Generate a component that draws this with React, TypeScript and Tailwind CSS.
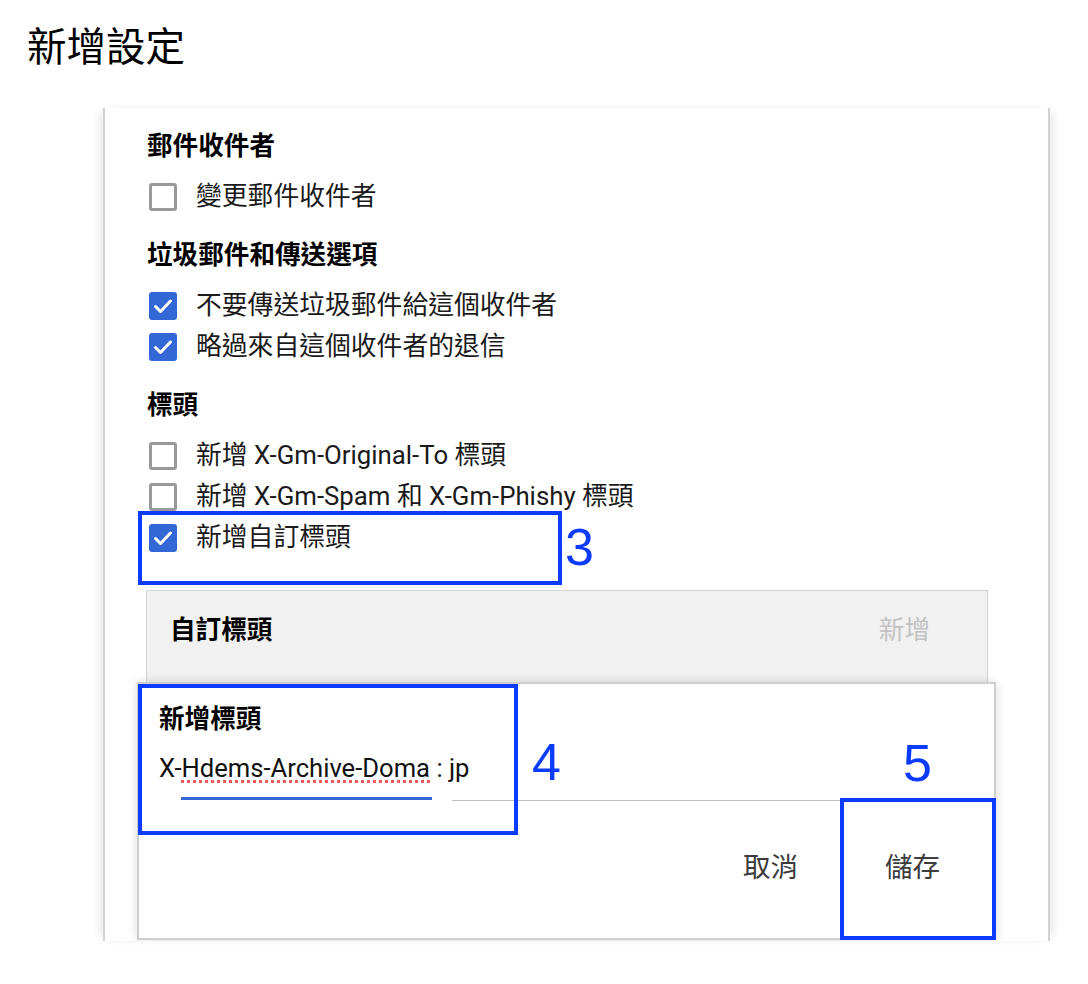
import React from 'react';

const FONT = "font-['Roboto','Noto_Sans_CJK_TC',sans-serif]";

function Checkbox({ checked }: { checked: boolean }) {
  if (checked) {
    return (
      <span className="ml-[2px] flex h-[28px] w-[28px] shrink-0 items-center justify-center rounded-[3px] bg-[#3367d6]">
        <svg width="24" height="24" viewBox="0 0 24 24" fill="none">
          <path d="M4.5 12.5l5 5L19.5 7" stroke="white" strokeWidth="3" strokeLinecap="round" strokeLinejoin="round" />
        </svg>
      </span>
    );
  }
  return <span className="ml-[2px] block h-[28px] w-[28px] shrink-0 rounded-[3px] border-[3px] border-[#999999] bg-white" />;
}

function Row({ checked, children }: { checked: boolean; children: React.ReactNode }) {
  return (
    <div className="flex h-[41px] items-center gap-[19px]">
      <Checkbox checked={checked} />
      <span className="text-[25.8px] leading-[41px] text-[#1a1a1a]">{children}</span>
    </div>
  );
}

function Heading({ children, className = '' }: { children: React.ReactNode; className?: string }) {
  return <div className={`h-[38px] text-[25.6px] font-bold leading-[38px] text-black ${className}`}>{children}</div>;
}

function Mark({ n, className }: { n: string; className: string }) {
  return (
    <div className={`absolute h-[52px] font-['Liberation_Sans',Arial,sans-serif] text-[52px] leading-[52px] text-[#0b3bff] ${className}`}>
      {n}
    </div>
  );
}

export default function App() {
  return (
    <div className={`min-h-[984px] w-[1088px] bg-white ${FONT}`}>
      <div className="pl-[27px] pt-[24px] text-[39.5px] leading-[48px] text-black">新增設定</div>

      <div className="ml-[103px] mt-[36px] h-[833px] w-[947px] overflow-hidden border-x-2 border-[#d2d2d2] bg-white pl-[42px] pt-[19px] shadow-[-7px_0_10px_-5px_rgba(0,0,0,0.12),7px_0_10px_-5px_rgba(0,0,0,0.12)]">
        <Heading>郵件收件者</Heading>
        <div className="mt-[11px]">
          <Row checked={false}>變更郵件收件者</Row>
        </div>

        <Heading className="mt-[19px]">垃圾郵件和傳送選項</Heading>
        <div className="mt-[11px]">
          <Row checked={true}>不要傳送垃圾郵件給這個收件者</Row>
          <Row checked={true}>略過來自這個收件者的退信</Row>
        </div>

        <Heading className="mt-[19px]">標頭</Heading>
        <div className="mt-[11px]">
          <Row checked={false}>新增 X-Gm-Original-To 標頭</Row>
          <Row checked={false}>新增 X-Gm-Spam 和 X-Gm-Phishy 標頭</Row>
          <div className="relative">
            <Row checked={true}>新增自訂標頭</Row>
            <div className="absolute left-[-9px] top-[-6px] h-[74px] w-[424px] border-[4px] border-[#0b3bff]" />
            <Mark n="3" className="left-[418px] top-[4px]" />
          </div>
        </div>

        <div className="ml-[-1px] mt-[32px] flex h-[92px] w-[842px] justify-between border border-b-0 border-[#d3d3d3] bg-[#f1f1f1] pl-[23px] pr-[57px] pt-[23px] text-[25.6px] leading-[32px]">
          <span className="font-bold text-black">自訂標頭</span>
          <span className="text-[#c2c2c2]">新增</span>
        </div>

        <div className="relative ml-[-10px] h-[258px] w-[859px] border-2 border-[#cfcfcf] bg-white shadow-[0_0_10px_rgba(0,0,0,0.14)]">
          <div className="pl-[20px] pt-[19px]">
            <div className="h-[32px] text-[25.6px] font-bold leading-[32px] text-black">新增標頭</div>
            <div className="mt-[17px] h-[32px] text-[25.6px] leading-[32px] text-[#111]">
              X-
              <span className="underline decoration-[#f05a5a] decoration-dotted decoration-[3px] underline-offset-[3px]">Hdems-Archive-Doma</span>
              {' '}: jp
            </div>
          </div>
          <div className="mt-[13px] flex items-start">
            <div className="ml-[42px] h-[3px] w-[251px] bg-[#3367d6]" />
            <div className="ml-[20px] mt-[3px] h-[1px] flex-1 bg-[#bdbdbd]" />
          </div>
          <div className="mt-[39px] flex h-[56px] items-center justify-end gap-[87px] pr-[54px] text-[27.5px] leading-[56px] text-[#3c3c3c]">
            <span>取消</span>
            <span>儲存</span>
          </div>

          <div className="absolute left-[-1px] top-0 h-[151px] w-[380px] border-[4px] border-[#0b3bff]" />
          <Mark n="4" className="left-[393px] top-[52px]" />
          <div className="absolute left-[701px] top-[114px] h-[142px] w-[156px] border-[4px] border-[#0b3bff]" />
          <Mark n="5" className="left-[764px] top-[53px]" />
        </div>
      </div>
    </div>
  );
}
